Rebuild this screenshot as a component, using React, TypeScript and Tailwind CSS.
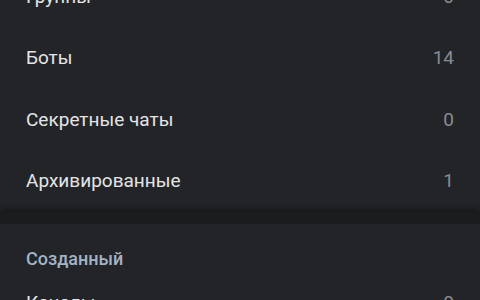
const rows: { label: string; value: number }[] = [
  { label: "Группы", value: 0 },
  { label: "Боты", value: 14 },
  { label: "Секретные чаты", value: 0 },
  { label: "Архивированные", value: 1 },
];

function Row({ label, value }: { label: string; value: number }) {
  return (
    <div className="flex h-[61.5px] items-center justify-between pl-[26px] pr-[26px]">
      <span className="text-[19px] leading-[24px] text-[#e3e4e6]">{label}</span>
      <span className="text-[19px] leading-[24px] text-[#878c93]">{value}</span>
    </div>
  );
}

export default function App() {
  return (
    <div
      className="h-[300px] w-[480px] overflow-hidden bg-[#232428]"
      style={{ fontFamily: "Roboto, 'Noto Sans', sans-serif" }}
    >
      <div className="-mt-[34px]">
        {rows.map((r) => (
          <Row key={r.label} label={r.label} value={r.value} />
        ))}
      </div>
      <div className="h-[12px] bg-[#1b1c1e] shadow-[0_-4px_6px_rgba(0,0,0,0.3)]" />
      <div className="pl-[26px] pt-[24px]">
        <span className="text-[18px] font-medium leading-[22px] text-[#a2b3c6]">Созданный</span>
      </div>
      <Row label="Каналы" value={0} />
    </div>
  );
}
